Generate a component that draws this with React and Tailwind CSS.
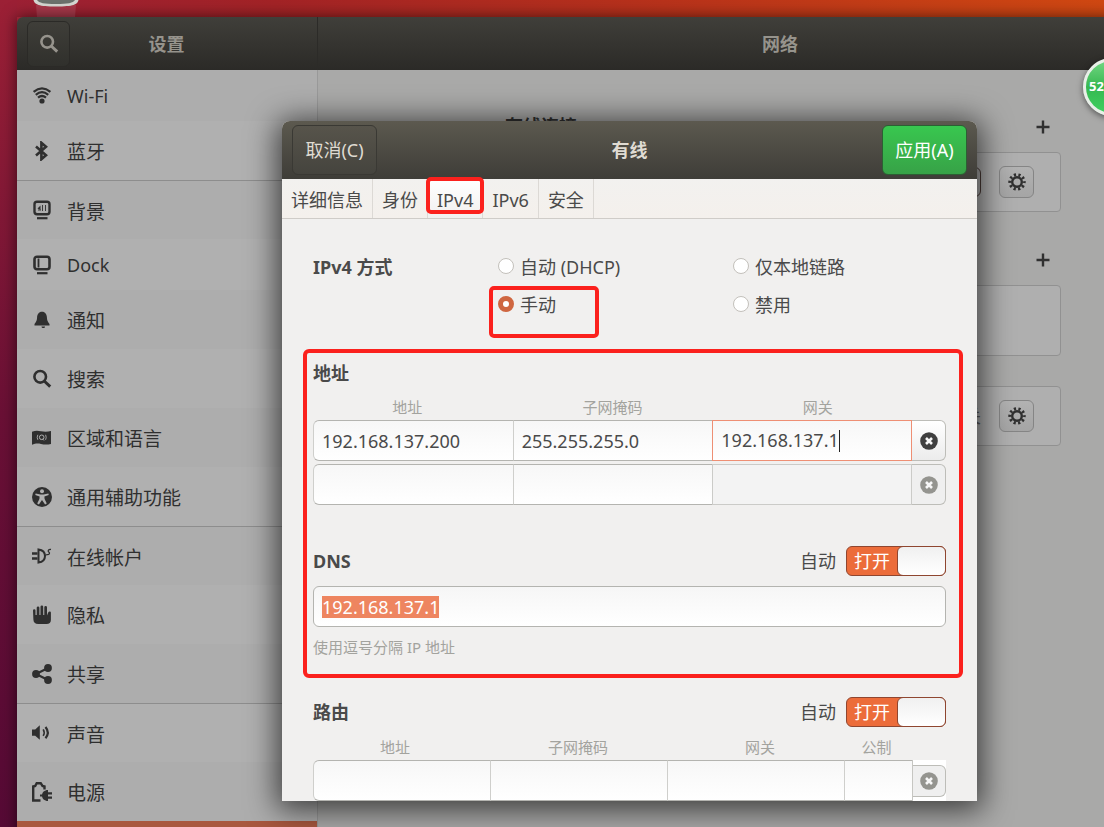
import { useState } from "react";

const WifiIcon = () => (
  <svg viewBox="0 0 20 20" className="size-5" fill="none" stroke="currentColor" strokeWidth="2.200">
    <path d="M1.600 5.800Q10 -1 18.400 5.800" />
    <path d="M3.800 8.800Q10 3.600 16.200 8.800" />
    <path d="M6 11.700Q10 8.300 14 11.700" />
    <circle cx="10" cy="15" r="2.600" fill="currentColor" stroke="none" />
  </svg>
);

const BluetoothIcon = () => (
  <svg viewBox="0 0 20 20" className="size-5" fill="none" stroke="currentColor" strokeWidth="2.600">
    <path d="M4 5.400l10 8.800-4.600 4V1.800l4.600 4-10 8.800" />
  </svg>
);

const BackgroundIcon = () => (
  <svg viewBox="0 0 20 20" className="size-5" fill="none" stroke="currentColor">
    <rect x="2.500" y="1.800" width="15" height="12.400" rx="2.500" strokeWidth="2.400" />
    <path d="M5 18.200h10.500" strokeWidth="2.200" />
    <path d="M5.500 8.500l3-3v4.500z" fill="currentColor" stroke="none" />
    <path d="M10.500 5v6M13.500 5v6M6 10h3" strokeWidth=".9" />
  </svg>
);

const DockIcon = () => (
  <svg viewBox="0 0 20 20" className="size-5" fill="none" stroke="currentColor">
    <rect x="2.500" y="1.800" width="15" height="12.400" rx="2.500" strokeWidth="2.600" />
    <path d="M6.500 3.500v9" strokeWidth="1.800" />
    <path d="M5 18.200h10.500" strokeWidth="2.200" />
  </svg>
);

const BellIcon = () => (
  <svg viewBox="0 0 20 20" className="size-5" fill="currentColor">
    <path d="M10 1.800c3.300 0 4.700 2.600 4.900 5.400.2 3 .5 4.200 2.600 6.800v1.500h-15V14c2.100-2.600 2.400-3.800 2.600-6.800C5.300 4.400 6.700 1.800 10 1.800zM9.500 16.500h3.500c0 1-.6 1.500-1.600 1.500s-1.900-.5-1.900-1.500z" />
  </svg>
);

const SearchIcon = () => (
  <svg viewBox="0 0 20 20" className="size-5" fill="none" stroke="currentColor" strokeWidth="2.600">
    <circle cx="8.200" cy="7.800" r="5.800" />
    <path d="M12.200 12l6 5.600" strokeWidth="3" />
  </svg>
);

const RegionIcon = () => (
  <svg viewBox="0 0 20 20" className="size-5" fill="none">
    <path d="M0 3.800c3.500-1.300 6-1 9-.5s6.500.6 10-.2v12.800c-3.500 1-7 .7-10 .1s-5.500-.7-9 .8z" fill="currentColor" />
    <circle cx="9.700" cy="9.300" r="2.300" stroke="#aeaeae" strokeWidth="1" />
    <path d="M5.800 6.800q-1.200 2.600 0 5M13.600 6.800q1.200 2.600 0 5M10.500 10.800l1.500 1.700" stroke="#aeaeae" strokeWidth=".9" />
  </svg>
);

const AccessIcon = () => (
  <svg viewBox="0 0 20 20" className="size-5" fill="none">
    <circle cx="10" cy="10" r="10" fill="currentColor" />
    <circle cx="10" cy="4.300" r="2" fill="#b0b0b0" />
    <path d="M3.600 6.600l4.900.8h3l4.900-.8.300 1.500-4.300 1.400.2 2.400 2.200 4.700-1.700.8L10 12.900l-3.100 4.500-1.700-.8 2.200-4.700.2-2.400-4.300-1.400z" fill="#b0b0b0" />
  </svg>
);

const AccountsIcon = () => (
  <svg viewBox="0 0 20 20" className="size-5" fill="none" stroke="currentColor" strokeWidth="2">
    <path d="M0 7.500h5.500M0 12.500h5.500" strokeWidth="2.400" />
    <path d="M6.500 3.500v13c4.500-.6 6.500-3 6.500-6.500S11 4.100 6.500 3.500z" />
    <path d="M13 9.500l2-1M19 3.500c-2.800-.3-3.500 1.500-2.200 2.500s.8 2.800-1.800 2.700" strokeWidth="1.300" />
  </svg>
);

const PrivacyIcon = () => (
  <svg viewBox="0 0 20 20" className="size-5" fill="currentColor">
    <path d="M1 5.500a1.200 1.200 0 0 1 2.500 0V10h1.200V2.800a1.300 1.300 0 0 1 2.700 0V10h1.100V1.800a1.300 1.300 0 0 1 2.700 0V10h1.100V2.300a1.300 1.300 0 0 1 2.700 0V10.500l1.200-3c.6-1.500 2.800-1.300 2.700.3V15c0 2.800-1.600 4-4.400 4H6.200C3 19 1.500 17.600 1.400 14.600z" />
  </svg>
);

const ShareIcon = () => (
  <svg viewBox="0 0 20 20" className="size-5" fill="currentColor">
    <path d="M16 4L4 10l12 6" fill="none" stroke="currentColor" strokeWidth="2.200" />
    <circle cx="4" cy="10" r="3.900" />
    <circle cx="16" cy="4" r="3.900" />
    <circle cx="16" cy="16" r="3.900" />
  </svg>
);

const SoundIcon = () => (
  <svg viewBox="0 0 20 20" className="size-5" fill="currentColor">
    <path d="M0 6.500h3.200L7.800 2.300v14.400L3.200 12.700H0z" />
    <path d="M11.200 6.300q2 3.300 0 6.600" fill="none" stroke="currentColor" strokeWidth="1.600" />
    <path d="M13.500 4q4.600 5.600 0 11.200" fill="none" stroke="currentColor" strokeWidth="2.200" />
  </svg>
);

const PowerIcon = () => (
  <svg viewBox="0 0 20 20" className="size-5" fill="none" stroke="currentColor" strokeWidth="2.400">
    <path d="M8.500 18.500H1.200V4.500l2-.5 1.500-2.800h4l1.800 2.800 2 .5v3" />
    <path d="M16 8v11c-3.600 0-6-2.300-6-5.500S12.400 8 16 8z" fill="currentColor" stroke="none" />
    <path d="M8 13.500h4M15 11.300h5M15 15.700h5" strokeWidth="2.200" />
  </svg>
);

const GearIcon = () => (
  <svg viewBox="0 0 20 20" className="size-5" fill="none" stroke="currentColor">
    <circle cx="10" cy="10" r="4.800" strokeWidth="2.400" />
    <circle cx="10" cy="10" r="7.200" strokeWidth="3" strokeDasharray="2.200 2.324" strokeDashoffset="1.100" />
  </svg>
);

const PlusIcon = () => (
  <svg viewBox="0 0 14 14" className="size-[14px]" stroke="currentColor" strokeWidth="2.400">
    <path d="M7 0.500v13M0.500 7h13" />
  </svg>
);

const ClearIcon = () => (
  <svg viewBox="0 0 18 18" className="size-[18px]">
    <circle cx="9" cy="9" r="8.800" fill="currentColor" />
    <path d="M6 6l6 6M12 6l-6 6" stroke="#f7f7f7" strokeWidth="2.600" />
  </svg>
);

const menu = [
  { label: "Wi-Fi", icon: WifiIcon, latin: true },
  { label: "蓝牙", icon: BluetoothIcon },
  { label: "背景", icon: BackgroundIcon, divider: true },
  { label: "Dock", icon: DockIcon, latin: true },
  { label: "通知", icon: BellIcon },
  { label: "搜索", icon: SearchIcon },
  { label: "区域和语言", icon: RegionIcon },
  { label: "通用辅助功能", icon: AccessIcon },
  { label: "在线帐户", icon: AccountsIcon, divider: true },
  { label: "隐私", icon: PrivacyIcon },
  { label: "共享", icon: ShareIcon },
  { label: "声音", icon: SoundIcon, divider: true },
  { label: "电源", icon: PowerIcon },
];

const tabs = ["详细信息", "身份", "IPv4", "IPv6", "安全"];

function Switch({ label }) {
  const [on, setOn] = useState(true);
  return (
    <div className="flex items-center gap-[10px]">
      <span className="text-[18px]">{label}</span>
      <button
        type="button"
        role="switch"
        aria-checked={on}
        aria-label={label}
        onClick={() => setOn(!on)}
        className="flex h-[30px] w-[100px] rounded-md border border-[#8f4630] bg-[#ec6c3a] text-[18px] leading-7 text-white"
      >
        <span className="w-[50px] text-center">打开</span>
        <span className="-my-px -mr-px h-[30px] flex-1 rounded-md border border-[#8f4630] bg-linear-to-b from-[#f0f0f0] to-white" />
      </button>
    </div>
  );
}

function ClearButton({ disabled, className }) {
  return (
    <button
      type="button"
      aria-label="删除"
      disabled={disabled}
      className={"flex items-center justify-center rounded-r-md border border-l-0 border-[#bdbdb8] " + className}
    >
      <ClearIcon />
    </button>
  );
}

function MethodOption({ label, checked, onChange, children }) {
  return (
    <label className="relative flex h-[38px] items-center gap-[6px] text-[18px]">
      <input
        type="radio"
        name="method"
        checked={checked}
        onChange={onChange}
        className="mb-[3px] size-4 appearance-none rounded-full border border-[#c3c0bb] bg-white checked:border-[5px] checked:border-[#cf6640]"
      />
      {label}
      {children}
    </label>
  );
}

const cell =
  "h-[41px] min-w-0 border-y border-l border-y-[#b4b4b0] border-l-[#cfcfcc] bg-linear-to-b from-[#f7f7f7] to-white px-2 text-[18px] outline-none";

function Sidebar() {
  return (
    <nav className="w-[301px] shrink-0 border-r border-[#999]">
      {menu.map(({ label, icon: Icon, divider, latin }) => (
        <a
          key={label}
          href="#"
          className={
            "flex items-center gap-[15px] pl-[15px] text-[#2f2f2f] odd:bg-[#adadad] even:bg-[#b0b0b0] " +
            (latin ? "h-[51px] text-[18px] " : "h-[59px] text-[19px] ") +
            (divider ? "border-t border-[#8d8d8d]" : "")
          }
        >
          <Icon />
          <span className={latin ? "pt-px" : "pt-1"}>{label}</span>
        </a>
      ))}
      <a href="#" aria-label="网络" className="block h-[59px] bg-[#a9583f]" />
    </nav>
  );
}

function NetworkPanel() {
  const addButton = "flex size-6 items-center justify-center";
  const gear =
    "flex h-8 w-[35px] items-center justify-center rounded-md border border-[#858585] bg-linear-to-b from-[#b2b2b2] to-[#a5a5a5] text-[#303030]";
  const card = "flex items-center justify-end gap-[18px] rounded-sm border border-[#919191] bg-[#afafaf] pr-[26px]";
  return (
    <main className="flex-1 bg-[#a9a9a8] pt-[42px] text-[#303030]">
      <div className="mx-auto w-[562px]">
        <div className="flex h-[29px] items-center justify-between px-[6px]">
          <h2 className="text-[18px] font-bold">有线连接</h2>
          <button type="button" aria-label="添加" className={addButton}><PlusIcon /></button>
        </div>
        <div className={"mt-[11px] h-[60px] " + card}>
          <span className="h-[30px] w-[100px] rounded-md border border-[#4b3b36] bg-[#adadad]" />
          <button type="button" aria-label="选项" className={gear}><GearIcon /></button>
        </div>

        <div className="mt-[33px] flex h-[29px] items-center justify-end px-[6px]">
          <button type="button" aria-label="添加" className={addButton}><PlusIcon /></button>
        </div>
        <div className={"mt-[11px] h-[71px] " + card} />

        <div className={"mt-[30px] h-[60px] " + card}>
          <span className="text-[18px] text-[#5c5c5c]">关</span>
          <button type="button" aria-label="选项" className={gear}><GearIcon /></button>
        </div>
      </div>
    </main>
  );
}

function WiredDialog() {
  const [method, setMethod] = useState("manual");
  const label = "h-[22px] text-center text-[15px] leading-[22px] text-[#a3a39e]";
  const heading = "text-[18px] font-bold leading-7";

  return (
    <div
      role="dialog"
      aria-label="有线"
      className="flex h-[680px] w-[695px] flex-col overflow-hidden rounded-t-lg bg-[#f1f0ef] text-[#4a4a4a] shadow-[0_4px_30px_5px_rgba(0,0,0,0.65)]"
    >
      <header className="flex h-[58px] shrink-0 items-center justify-between bg-linear-to-b from-[#5c594f] to-[#3e3d38] px-[10px] text-[18px] text-[#dfdbd2]">
        <button type="button" className="h-[50px] w-[85px] rounded-md border border-[#3a3934] bg-linear-to-b from-[#57544b] to-[#45443e]">
          取消(C)
        </button>
        <h1 className="font-bold">有线</h1>
        <button type="button" className="h-[50px] w-[85px] rounded-md border border-[#2c5f33] bg-linear-to-b from-[#38c74f] to-[#37a247] text-white">
          应用(A)
        </button>
      </header>

      <div role="tablist" className="flex h-10 shrink-0 border-b border-[#cfccc8] bg-linear-to-b from-[#f2f1ef] to-[#f4f0ec]">
        {tabs.map((tab) => (
          <button
            key={tab}
            type="button"
            role="tab"
            aria-selected={tab === "IPv4"}
            className="relative border-r border-[#dcd9d5] px-[9px] pt-1 text-[18px] aria-selected:bg-linear-to-b aria-selected:from-white aria-selected:to-[#f1f0ef]"
          >
            {tab}
            {tab === "IPv4" && (
              <span className="absolute -inset-x-[2px] -top-[2px] h-[37px] rounded-[5px] border-4 border-[#fb211d]" />
            )}
          </button>
        ))}
      </div>

      <div className="flex-1 overflow-hidden px-[31px] pt-[29px]">
        <div className="grid grid-cols-[185px_235px_1fr]">
          <h2 className="row-span-2 text-[18px] font-bold leading-[38px]">IPv4 方式</h2>
          <MethodOption label="自动 (DHCP)" checked={method === "auto"} onChange={() => setMethod("auto")} />
          <MethodOption label="仅本地链路" checked={method === "local"} onChange={() => setMethod("local")} />
          <MethodOption label="手动" checked={method === "manual"} onChange={() => setMethod("manual")}>
            <span className="absolute -left-[9px] top-0 h-[52px] w-[110px] rounded-[5px] border-4 border-[#fb211d]" />
          </MethodOption>
          <MethodOption label="禁用" checked={method === "off"} onChange={() => setMethod("off")} />
        </div>

        <div className="-ml-[10px] -mr-[17px] mt-[25px] rounded-md border-4 border-[#fb211d] pb-4 pl-[6px] pr-[13px] pt-[6px]">
          <h2 className={heading}>地址</h2>
          <div className="mt-[9px] grid grid-cols-[188fr_222fr_188fr_34px]">
            <span className={label}>地址</span>
            <span className={label}>子网掩码</span>
            <span className={label}>网关</span>
          </div>
          <div className="mt-[2px] grid grid-cols-[1fr_1fr_1fr_34px]">
            <input aria-label="地址" defaultValue="192.168.137.200" className={cell + " rounded-l-md"} />
            <input aria-label="子网掩码" defaultValue="255.255.255.0" className={cell} />
            <div className="flex h-[41px] items-center border border-[#ee8f74] bg-linear-to-b from-[#f7f7f7] to-white pl-2">
              <input aria-label="网关" defaultValue="192.168.137.1" className="field-sizing-content text-[18px] outline-none" />
              <span className="h-[22px] w-px bg-[#222]" />
            </div>
            <ClearButton className="bg-linear-to-b from-white to-[#ececec] text-[#3f3f3f]" />
          </div>
          <div className="mt-[3px] grid grid-cols-[1fr_1fr_1fr_34px]">
            <input aria-label="地址" className={cell + " rounded-l-md"} />
            <input aria-label="子网掩码" className={cell} />
            <input aria-label="网关" disabled className="h-[41px] min-w-0 border border-[#cbcbc8] bg-[#f3f3f3]" />
            <ClearButton disabled className="bg-[#efefef] text-[#94948f]" />
          </div>

          <div className="mt-[41px] flex h-[30px] items-center justify-between">
            <h2 className={heading}>DNS</h2>
            <Switch label="自动" />
          </div>
          <div className="mt-[10px] flex h-[41px] items-center rounded-md border border-[#b4b4b0] bg-linear-to-b from-[#f6f6f6] to-white px-2">
            <input
              aria-label="DNS"
              defaultValue="192.168.137.1"
              className="field-sizing-content h-[22px] bg-[#ee8560] text-[18px] leading-[22px] text-white outline-none"
            />
          </div>
          <p className="mt-[9px] h-[22px] text-[15px] leading-[22px] text-[#a3a39e]">使用逗号分隔 IP 地址</p>
        </div>

        <div className="mt-[19px] flex h-[30px] items-center justify-between">
          <h2 className={heading}>路由</h2>
          <Switch label="自动" />
        </div>
        <div className="mt-[9px] grid grid-cols-[164px_202px_162px_1fr_34px]">
          <span className={label}>地址</span>
          <span className={label}>子网掩码</span>
          <span className={label}>网关</span>
          <span className={label}>公制</span>
        </div>
        <div className="mt-[2px] grid grid-cols-[177px_177px_177px_1fr_34px]">
          <input aria-label="地址" className={cell + " rounded-l-md"} />
          <input aria-label="子网掩码" className={cell} />
          <input aria-label="网关" className={cell} />
          <input aria-label="公制" className={cell} />
          <div className="flex items-center border-l border-[#c6c6c2] bg-white">
            <ClearButton disabled className="h-8 flex-1 bg-[#efefef] text-[#94948f]" />
          </div>
        </div>
      </div>
    </div>
  );
}

export default function App() {
  return (
    <div className="relative h-screen overflow-hidden bg-[linear-gradient(to_right,#9c2035_0%,#a32326_25%,#b8321b_60%,#d04812_100%)] pl-[17px] font-['Noto_Sans','Noto_Sans_CJK_SC',sans-serif]">
      <div className="absolute inset-y-0 left-0 w-[17px] bg-linear-to-b from-[#9c2035] via-[#6a1035] to-[#560a35]" />
      <svg viewBox="0 0 48 17" className="absolute left-8 top-0 h-[17px] w-12">
        <path d="M4 5h40l-1 12H5z" fill="#b04a5c" opacity=".6" />
        <path d="M1.500 0h45c-1 4.500-5 6.500-22.500 6.500S2.500 4.500 1.500 0z" fill="#d5d8d2" />
        <path d="M5 0h38c-2 3-7 4-19 4S7 3 5 0z" fill="#6b716c" />
      </svg>

      <div className="relative mt-[17px] min-w-[1225px] shadow-[0_0_14px_rgba(0,0,0,0.6)]">
        <header className="flex h-[53px] rounded-tl-md bg-linear-to-b from-[#403f3a] to-[#2b2a27] text-[18px] font-bold text-[#96938c]">
          <div className="flex w-[301px] items-center border-r border-[#2c2b28] pl-[10px]">
            <button type="button" aria-label="搜索" className="flex h-[46px] w-[43px] items-center justify-center rounded-md border border-[#2b2a27] bg-linear-to-b from-[#3f3e39] to-[#30302c]">
              <SearchIcon />
            </button>
            <h1 className="flex-1 pr-[54px] pt-px text-center">设置</h1>
          </div>
          <h1 className="flex flex-1 items-center justify-center pt-px">网络</h1>
        </header>
        <div className="flex">
          <Sidebar />
          <NetworkPanel />
        </div>
        <div className="absolute inset-x-0 top-[104px] flex justify-center">
          <WiredDialog />
        </div>
      </div>

      {/* floating monitor badge, half off the right edge */}
      <div className="absolute -right-[37px] top-[58px] flex size-[58px] items-center rounded-full border-[3px] border-[#e8efe8] bg-linear-to-b from-[#6fd681] via-[#35b851] to-[#3fd05f] pl-[3px] text-[13px] font-bold text-white shadow-[0_2px_6px_rgba(0,0,0,0.5)]">
        52
      </div>
    </div>
  );
}
